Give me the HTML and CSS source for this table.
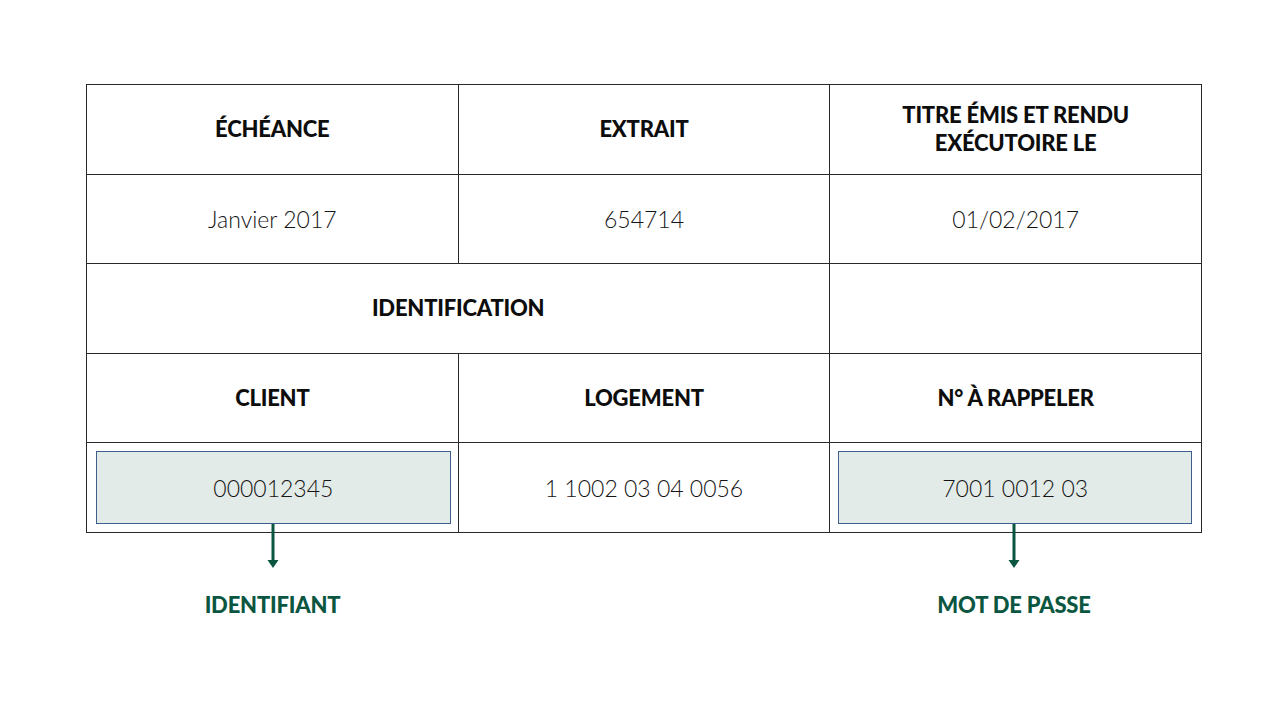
FILE: index.html
```html
<!DOCTYPE html>
<html lang="fr">
<head>
  <meta charset="UTF-8">
  <title>Identifiants</title>
  <link rel="stylesheet" href="styles.css">
</head>
<body>
  <div class="page">
    <table class="notice">
      <tr>
        <th>ÉCHÉANCE</th>
        <th>EXTRAIT</th>
        <th>TITRE ÉMIS ET RENDU<br>EXÉCUTOIRE LE</th>
      </tr>
      <tr>
        <td>Janvier 2017</td>
        <td>654714</td>
        <td>01/02/2017</td>
      </tr>
      <tr>
        <th colspan="2">IDENTIFICATION</th>
        <td></td>
      </tr>
      <tr>
        <th>CLIENT</th>
        <th>LOGEMENT</th>
        <th>N° À RAPPELER</th>
      </tr>
      <tr>
        <td class="boxed"><div class="highlight">000012345</div></td>
        <td>1 1002 03 04 0056</td>
        <td class="boxed right"><div class="highlight">7001 0012 03</div></td>
      </tr>
    </table>

    <div class="pointers">
      <div class="pointer">
        <svg class="arrow" width="14" height="44" viewBox="0 0 14 44">
          <rect x="5.5" y="0" width="3" height="37" fill="#0b5641"/>
          <polygon points="1.5,36 12.5,36 7,44" fill="#0b5641"/>
        </svg>
        <span class="label">IDENTIFIANT</span>
      </div>
      <div></div>
      <div class="pointer last">
        <svg class="arrow" width="14" height="44" viewBox="0 0 14 44">
          <rect x="5.5" y="0" width="3" height="37" fill="#0b5641"/>
          <polygon points="1.5,36 12.5,36 7,44" fill="#0b5641"/>
        </svg>
        <span class="label">MOT DE PASSE</span>
      </div>
    </div>
  </div>
</body>
</html>
```

FILE: styles.css
```css
body {
  margin: 0;
  background: #fff;
  font-family: 'Lato', 'Liberation Sans', sans-serif;
  color: #111;
}

.page {
  padding: 84px 0 0 86px;
  width: 1116px;
}

.notice {
  width: 1116px;
  border-collapse: collapse;
  table-layout: fixed;
}

.notice th,
.notice td {
  box-sizing: border-box;
  border: 1px solid #2a2a2a;
  height: 89.6px;
  padding: 0;
  text-align: center;
  vertical-align: middle;
}

.notice th {
  font-size: 22px;
  font-weight: 900;
  letter-spacing: -0.2px;
  line-height: 28px;
  color: #0d0d0d;
}

.notice td {
  font-size: 23px;
  font-weight: 300;
  color: #151515;
}

.notice td.boxed {
  padding: 8px 7px 8px 9px;
}

.notice td.boxed.right {
  padding: 8px 9px 8px 8px;
}

.highlight {
  box-sizing: border-box;
  height: 73px;
  display: flex;
  align-items: center;
  justify-content: center;
  background: #e3ebe8;
  border: 1px solid #3e5f8c;
}

.pointers {
  display: grid;
  grid-template-columns: repeat(3, 1fr);
  margin-top: -9px;
}

.pointer {
  display: flex;
  flex-direction: column;
  align-items: center;
}

.pointer:first-child {
  padding-left: 1px;
}

.pointer.last {
  padding-right: 4px;
}

.arrow {
  display: block;
}

.label {
  margin-top: 23px;
  font-size: 22px;
  font-weight: 900;
  letter-spacing: -0.2px;
  color: #0b5641;
}
```
